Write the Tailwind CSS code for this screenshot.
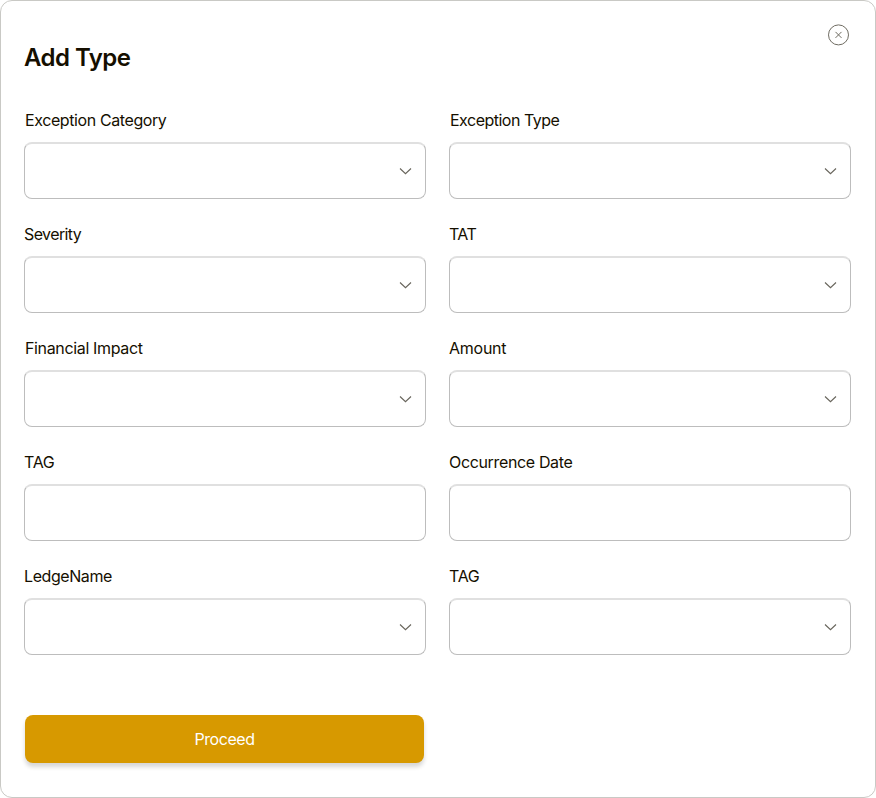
<!DOCTYPE html>
<html lang="en">
<head>
<meta charset="utf-8">
<title>Add Type</title>
<script src="https://cdn.jsdelivr.net/npm/@tailwindcss/browser@4"></script>
</head>
<body class="bg-white">
<main class="relative flex h-[798px] w-[876px] flex-col rounded-xl border border-[#c9c9c5] bg-white px-[23px] font-['Inter','Liberation_Sans',sans-serif] text-[#150f00]">
  <button aria-label="Close" class="absolute top-[23px] right-[25px] size-[22px]">
    <svg class="size-[22px]" viewBox="0 0 22 22" fill="none" stroke="#6f6c62"><circle cx="10.5" cy="10.9" r="10"/><path d="M7.5 7.9l6 6M13.5 7.9l-6 6"/></svg>
  </button>
  <h1 class="mt-[41px] h-8 text-2xl leading-8 font-semibold tracking-[-0.55px]"><span>Add Type</span></h1>
  <form class="mt-[34px] grid grid-cols-[402px_402px] gap-x-[23px] gap-y-[21px]">
    <div class="h-[93px]"><label class="block h-[34px] pl-px text-base leading-6 tracking-[-0.4px]"><span>Exception Category</span></label><div class="flex h-[57px] items-center justify-end rounded-lg border border-t-2 border-[#bdbdbd] border-t-[#e0e0e0] pr-[13px]"><svg class="h-[7px] w-[13px]" viewBox="0 0 13 7" fill="none" stroke="#68655c" stroke-width="1.15"><path d="M1 .5L6.5 5.7L12 .5"/></svg></div></div>
    <div class="h-[93px]"><label class="block h-[34px] pl-px text-base leading-6 tracking-[-0.5px]"><span>Exception Type</span></label><div class="flex h-[57px] items-center justify-end rounded-lg border border-t-2 border-[#bdbdbd] border-t-[#e0e0e0] pr-[13px]"><svg class="h-[7px] w-[13px]" viewBox="0 0 13 7" fill="none" stroke="#68655c" stroke-width="1.15"><path d="M1 .5L6.5 5.7L12 .5"/></svg></div></div>
    <div class="h-[93px]"><label class="block h-[34px] text-base leading-6 tracking-[-0.6px]"><span>Severity</span></label><div class="flex h-[57px] items-center justify-end rounded-lg border border-t-2 border-[#bdbdbd] border-t-[#e0e0e0] pr-[13px]"><svg class="h-[7px] w-[13px]" viewBox="0 0 13 7" fill="none" stroke="#68655c" stroke-width="1.15"><path d="M1 .5L6.5 5.7L12 .5"/></svg></div></div>
    <div class="h-[93px]"><label class="block h-[34px] text-base leading-6 tracking-[-0.6px]"><span>TAT</span></label><div class="flex h-[57px] items-center justify-end rounded-lg border border-t-2 border-[#bdbdbd] border-t-[#e0e0e0] pr-[13px]"><svg class="h-[7px] w-[13px]" viewBox="0 0 13 7" fill="none" stroke="#68655c" stroke-width="1.15"><path d="M1 .5L6.5 5.7L12 .5"/></svg></div></div>
    <div class="h-[93px]"><label class="block h-[34px] pl-px text-base leading-6 tracking-[-0.35px]"><span>Financial Impact</span></label><div class="flex h-[57px] items-center justify-end rounded-lg border border-t-2 border-[#bdbdbd] border-t-[#e0e0e0] pr-[13px]"><svg class="h-[7px] w-[13px]" viewBox="0 0 13 7" fill="none" stroke="#68655c" stroke-width="1.15"><path d="M1 .5L6.5 5.7L12 .5"/></svg></div></div>
    <div class="h-[93px]"><label class="block h-[34px] text-base leading-6 tracking-[-0.25px]"><span>Amount</span></label><div class="flex h-[57px] items-center justify-end rounded-lg border border-t-2 border-[#bdbdbd] border-t-[#e0e0e0] pr-[13px]"><svg class="h-[7px] w-[13px]" viewBox="0 0 13 7" fill="none" stroke="#68655c" stroke-width="1.15"><path d="M1 .5L6.5 5.7L12 .5"/></svg></div></div>
    <div class="h-[93px]"><label class="block h-[34px] text-base leading-6 tracking-[-0.3px]"><span>TAG</span></label><div class="h-[57px] rounded-lg border border-t-2 border-[#bdbdbd] border-t-[#e0e0e0]"></div></div>
    <div class="h-[93px]"><label class="block h-[34px] text-base leading-6 tracking-[-0.35px]"><span>Occurrence Date</span></label><div class="h-[57px] rounded-lg border border-t-2 border-[#bdbdbd] border-t-[#e0e0e0]"></div></div>
    <div class="h-[93px]"><label class="block h-[34px] text-base leading-6 tracking-[-0.42px]"><span>LedgeName</span></label><div class="flex h-[57px] items-center justify-end rounded-lg border border-t-2 border-[#bdbdbd] border-t-[#e0e0e0] pr-[13px]"><svg class="h-[7px] w-[13px]" viewBox="0 0 13 7" fill="none" stroke="#68655c" stroke-width="1.15"><path d="M1 .5L6.5 5.7L12 .5"/></svg></div></div>
    <div class="h-[93px]"><label class="block h-[34px] text-base leading-6 tracking-[-0.3px]"><span>TAG</span></label><div class="flex h-[57px] items-center justify-end rounded-lg border border-t-2 border-[#bdbdbd] border-t-[#e0e0e0] pr-[13px]"><svg class="h-[7px] w-[13px]" viewBox="0 0 13 7" fill="none" stroke="#68655c" stroke-width="1.15"><path d="M1 .5L6.5 5.7L12 .5"/></svg></div></div>
  </form>
  <button class="mt-[58px] ml-px h-12 w-[399px] rounded-lg bg-[#d79900] text-base tracking-[-0.45px] text-white shadow-[0_4px_4px_rgba(0,0,0,0.16)]"><span>Proceed</span></button>
</main>
</body>
</html>
